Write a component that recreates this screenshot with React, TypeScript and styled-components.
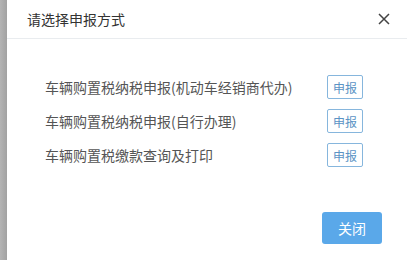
import React from "react"
import styled, { createGlobalStyle } from "styled-components"

const Global = createGlobalStyle`
  html, body { margin: 0; padding: 0; background: #fff; }
  body { font-family: "Noto Sans CJK SC", "Liberation Sans", sans-serif; }
`

const Page = styled.div`
  display: flex;
  width: 407px;
  height: 260px;
  overflow: hidden;
`

const Backdrop = styled.div`
  width: 7px;
  flex-shrink: 0;
  background: linear-gradient(90deg, #b4b4b4, #a2a2a2);
`

const Dialog = styled.div`
  flex: 1;
  display: flex;
  flex-direction: column;
  background: #fff;
`

const Header = styled.div`
  height: 39px;
  box-sizing: border-box;
  border-bottom: 1px solid #e9ecef;
  display: flex;
  align-items: center;
  justify-content: space-between;
  padding: 0 17px 0 20px;
`

const Title = styled.h3`
  margin: 0;
  font-size: 14px;
  font-weight: 400;
  color: #333;
`

const CloseIcon = styled.button`
  border: 0;
  background: none;
  padding: 0;
  width: 12px;
  height: 12px;
  display: flex;
  cursor: pointer;
`

const Body = styled.div`
  display: flex;
  flex-direction: column;
  gap: 10px;
  padding: 36px 44px 0 38px;
`

const Row = styled.div`
  display: flex;
  align-items: center;
  justify-content: space-between;
  height: 24px;
`

const Label = styled.span`
  font-size: 14px;
  color: #555;
`

const SmallButton = styled.button`
  width: 36px;
  height: 24px;
  box-sizing: border-box;
  border: 1px solid #86b6dd;
  border-radius: 2px;
  background: #fff;
  color: #5b93c4;
  font-size: 12px;
  font-family: inherit;
  padding: 0;
`

const Footer = styled.div`
  display: flex;
  justify-content: flex-end;
  padding: 45px 25px 0 0;
`

const PrimaryButton = styled.button`
  width: 60px;
  height: 32px;
  border: 0;
  border-radius: 3px;
  background: #5aa8e9;
  color: #fff;
  font-size: 14px;
  font-family: inherit;
  padding: 0;
`

const items = [
  "车辆购置税纳税申报(机动车经销商代办)",
  "车辆购置税纳税申报(自行办理)",
  "车辆购置税缴款查询及打印",
]

export default function App() {
  return (
    <Page>
      <Global />
      <Backdrop />
      <Dialog>
        <Header>
          <Title>请选择申报方式</Title>
          <CloseIcon>
            <svg width="12" height="12" viewBox="0 0 12 12">
              <path d="M1 1L11 11M11 1L1 11" stroke="#444" strokeWidth="1.5" />
            </svg>
          </CloseIcon>
        </Header>
        <Body>
          {items.map((t) => (
            <Row key={t}>
              <Label>{t}</Label>
              <SmallButton>申报</SmallButton>
            </Row>
          ))}
        </Body>
        <Footer>
          <PrimaryButton>关闭</PrimaryButton>
        </Footer>
      </Dialog>
    </Page>
  )
}
